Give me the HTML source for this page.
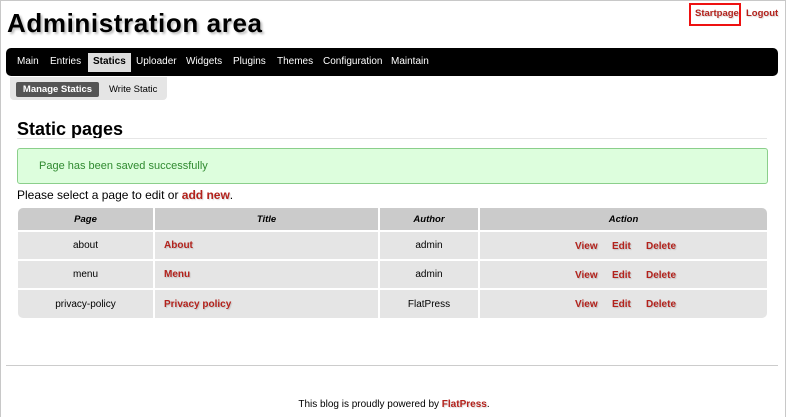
<!DOCTYPE html>
<html><head><style>
*{margin:0;padding:0;box-sizing:border-box}
body{width:786px;height:417px;background:#fff;font-family:"Liberation Sans",Arial,sans-serif;font-size:11px;color:#000;position:relative;overflow:hidden;border:1px solid #c8c8c8;border-bottom:none}
.a{position:absolute}
a{color:#b3221c;font-weight:bold;text-decoration:none;text-shadow:1px 1px 1px rgba(0,0,0,.15)}
h1{position:absolute;left:6px;top:7px;font-size:26px;letter-spacing:0.6px;font-weight:bold;text-shadow:2px 2px 2px rgba(0,0,0,.25)}
.nav{left:5px;top:47px;width:772px;height:28px;background:#000;border-radius:5px}
.nav span{position:absolute;top:8px;color:#fff;font-size:10px}
.act{background:#ddd;color:#000!important;font-weight:bold;top:5px!important;padding:3px 5px;height:19px}
.sub{left:9px;top:76px;width:157px;height:23px;background:#e5e5e5;border-radius:0 0 4px 4px}
table{position:absolute;left:17px;top:207px;width:749px;border-collapse:collapse;border-radius:5px;overflow:hidden}
td,th{border:2px solid #fff;text-align:center;font-size:10px;height:29px;background:#e5e5e5}
th{background:#cbcbcb;font-style:italic;height:23px;font-size:9.5px}
tr>*:first-child{border-left:none}tr>*:last-child{border-right:none}
tr:first-child>*{border-top:none}tr:last-child>*{border-bottom:none}
td.l{text-align:left;padding-left:9px}
td.act2{text-align:left;position:relative}
td.act2 a{position:absolute;top:9px}
</style></head><body>
<h1>Administration area</h1>
<div class="a" style="left:688px;top:2px;width:52px;height:23px;border:2px solid #e11"></div>
<a class="a" style="left:694px;top:7px;font-size:9.5px">Startpage</a>
<a class="a" style="left:745px;top:7px;font-size:9.5px">Logout</a>
<div class="a nav">
<span style="left:11px">Main</span><span style="left:44px">Entries</span>
<span class="act" style="left:82px">Statics</span>
<span style="left:130px">Uploader</span><span style="left:180px">Widgets</span>
<span style="left:227px">Plugins</span><span style="left:271px">Themes</span>
<span style="left:317px">Configuration</span><span style="left:385px">Maintain</span>
</div>
<div class="a sub"></div>
<div class="a" style="left:15px;top:81px;width:83px;height:15px;background:#555;border-radius:2px;color:#fff;font-weight:bold;font-size:9.5px;line-height:15px;text-align:center">Manage Statics</div>
<div class="a" style="left:108px;top:83px;font-size:9.5px">Write Static</div>
<div class="a" style="left:16px;top:118px;font-size:18px;font-weight:bold">Static pages</div>
<div class="a" style="left:16px;top:137px;width:750px;border-top:1px solid #e6e6e6"></div>
<div class="a" style="left:16px;top:147px;width:751px;height:36px;background:#ddfedd;border:1px solid #8bcf8b;border-radius:3px;color:#2f8a2f;font-size:11px;padding:11px 0 0 21px">Page has been saved successfully</div>
<div class="a" style="left:16px;top:187px;font-size:12px">Please select a page to edit or <a>add new</a>.</div>
<table>
<tr><th style="width:136px">Page</th><th style="width:225px">Title</th><th style="width:100px">Author</th><th>Action</th></tr>
<tr><td>about</td><td class="l"><a>About</a></td><td>admin</td><td class="act2"><a style="left:95px">View</a><a style="left:132px">Edit</a><a style="left:166px">Delete</a></td></tr>
<tr><td>menu</td><td class="l"><a>Menu</a></td><td>admin</td><td class="act2"><a style="left:95px">View</a><a style="left:132px">Edit</a><a style="left:166px">Delete</a></td></tr>
<tr><td>privacy-policy</td><td class="l"><a>Privacy policy</a></td><td>FlatPress</td><td class="act2"><a style="left:95px">View</a><a style="left:132px">Edit</a><a style="left:166px">Delete</a></td></tr>
</table>
<div class="a" style="left:5px;top:364px;width:772px;border-top:1px solid #ccc"></div>
<div class="a" style="left:0;top:398px;width:786px;text-align:center;font-size:10px">This blog is proudly powered by <a>FlatPress</a>.</div>
</body></html>
